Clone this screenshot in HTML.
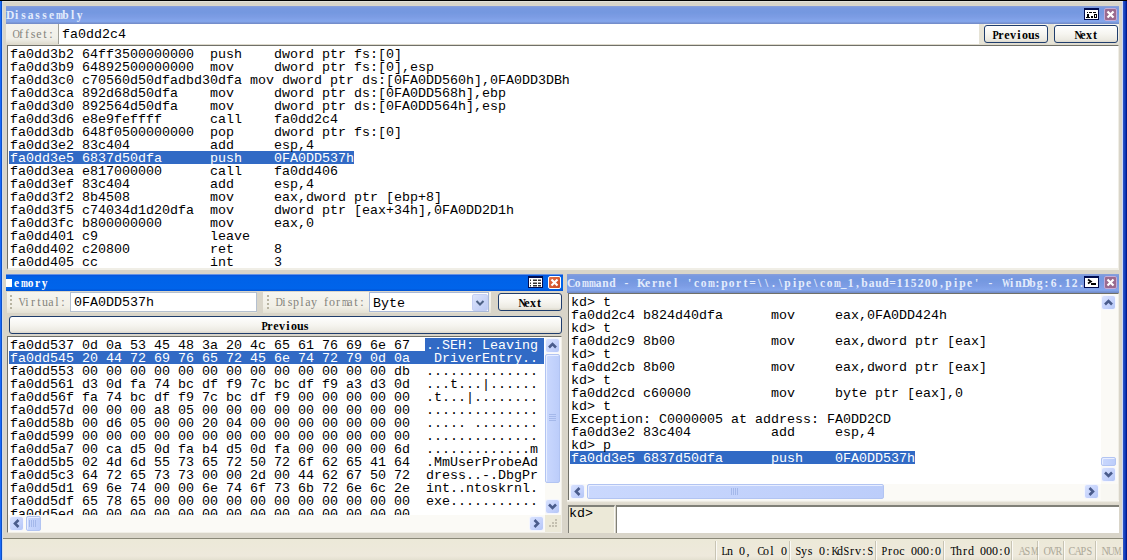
<!DOCTYPE html>
<html><head><meta charset="utf-8"><style>
html,body{margin:0;padding:0;}
body{width:1127px;height:560px;position:relative;overflow:hidden;background:#ece9d8;}
.t{position:absolute;white-space:pre;font-family:"Liberation Mono", monospace;font-size:13.333px;line-height:13px;}
.n{position:absolute;white-space:pre;font-family:"Liberation Mono", monospace;font-size:12px;line-height:12px;transform:scaleX(0.8333);transform-origin:0 0;}
.ns{position:absolute;white-space:pre;font-family:"Liberation Serif",serif;font-size:12px;line-height:12px;}
.ns span{display:inline-block;width:6px;text-align:center;}
.ns span.w{transform:scaleX(0.7);}
.ns span.u{transform:scaleX(0.85);}
.ts{position:absolute;white-space:pre;font-family:"Liberation Serif",serif;font-weight:bold;font-size:11.5px;line-height:12px;}
.ts span{display:inline-block;width:7px;text-align:center;}
.ts span.w{transform:scaleX(0.72);}
.tt{position:absolute;white-space:pre;font-family:"Liberation Mono", monospace;font-weight:bold;font-size:12px;line-height:12px;transform:scaleX(0.9722);transform-origin:0 0;}
</style></head><body>
<div style="position:absolute;left:0px;top:0px;width:1127px;height:560px;background:#d9d5c9"></div>
<div style="position:absolute;left:0px;top:0px;width:1px;height:560px;background:#1a6af8"></div>
<div style="position:absolute;left:1px;top:0px;width:1px;height:560px;background:#0c50c8"></div>
<div style="position:absolute;left:2px;top:1px;width:1px;height:559px;background:#d0dcec"></div>
<div style="position:absolute;left:1122px;top:1px;width:1px;height:559px;background:#c8d8fc"></div>
<div style="position:absolute;left:1123px;top:0px;width:1px;height:560px;background:#2a50c0"></div>
<div style="position:absolute;left:1124px;top:0px;width:1px;height:560px;background:#1844c0"></div>
<div style="position:absolute;left:1125px;top:0px;width:1px;height:560px;background:#0c34b0"></div>
<div style="position:absolute;left:1126px;top:0px;width:1px;height:560px;background:#001a90"></div>
<div style="position:absolute;left:0px;top:0px;width:1127px;height:1px;background:#000"></div>
<div style="position:absolute;left:3px;top:1px;width:1119px;height:1px;background:#e4e2da"></div>
<div style="position:absolute;left:6px;top:6px;width:1113px;height:18px;background:linear-gradient(#8ca0d8 0px,#7898e0 2px,#7498e0 35%,#7c9ce4 60%,#84a6ec 85%,#7088c4 100%)"></div>
<div class="ts" style="left:6px;top:9px;color:#e4ecfc;"><span>D</span><span>i</span><span>s</span><span>a</span><span>s</span><span>s</span><span>e</span><span class="w">m</span><span>b</span><span>l</span><span>y</span></div>
<div style="position:absolute;left:1084px;top:8px;width:15px;height:12px;box-sizing:border-box;background:#fff;border:1px solid #000c50;border-top-width:2px;"></div>
<svg style="position:absolute;left:1084px;top:8px" width="15" height="12" viewBox="0 0 15 12"><g fill="#000"><rect x="3" y="4" width="1" height="1"/><rect x="5" y="4" width="3" height="1"/><rect x="9" y="4" width="3" height="1"/><rect x="3" y="6" width="2" height="4"/><rect x="2" y="9" width="4" height="1"/><rect x="7" y="8" width="2" height="2"/><rect x="10" y="6" width="3" height="4"/></g><rect x="11" y="7" width="1" height="2" fill="#fff"/></svg>
<div style="position:absolute;left:1104px;top:8px;width:13px;height:13px;box-sizing:border-box;background:#9a6a8e;border:1px solid #c4acd8;border-radius:2px;"></div>
<svg style="position:absolute;left:1104px;top:8px" width="13" height="13" viewBox="0 0 13 13"><path d="M3.5 3.5 L9.5 9.5 M9.5 3.5 L3.5 9.5" stroke="#fff" stroke-width="2.2"/></svg>
<div style="position:absolute;left:6px;top:24px;width:1113px;height:21px;background:linear-gradient(#f4f3ee 0%,#f0efe8 70%,#dcd8ca 100%)"></div>
<div class="ns" style="left:12px;top:28px;color:#84847c;font-weight:normal;"><span class="u">O</span><span>f</span><span>f</span><span>s</span><span>e</span><span>t</span><span>:</span></div>
<div style="position:absolute;left:58px;top:24px;width:921px;height:20px;background:#fff;border-left:1px solid #a0a098;box-sizing:border-box"></div>
<div class="t" style="left:62px;top:28px;color:#000;">fa0dd2c4</div>
<div style="position:absolute;left:979px;top:24px;width:5px;height:20px;background:#e6e3d6"></div>
<div style="position:absolute;left:1048px;top:24px;width:6px;height:20px;background:#e6e3d6"></div>
<div style="position:absolute;left:984px;top:25px;width:64px;height:18px;box-sizing:border-box;border:1px solid #1f3d6c;border-radius:3px;background:linear-gradient(#fefefe 0%,#f6f5f0 50%,#eceae2 85%,#dcd8cc 100%);"></div>
<div class="ns" style="left:992px;top:29px;color:#000;font-weight:bold;"><span class="u">P</span><span>r</span><span>e</span><span>v</span><span>i</span><span>o</span><span>u</span><span>s</span></div>
<div style="position:absolute;left:1054px;top:25px;width:64px;height:18px;box-sizing:border-box;border:1px solid #1f3d6c;border-radius:3px;background:linear-gradient(#fefefe 0%,#f6f5f0 50%,#eceae2 85%,#dcd8cc 100%);"></div>
<div class="ns" style="left:1074px;top:29px;color:#000;font-weight:bold;"><span class="u">N</span><span>e</span><span>x</span><span>t</span></div>
<div style="position:absolute;left:7px;top:45px;width:1112px;height:225px;background:#fff;box-sizing:border-box;border-top:1px solid #707068;border-left:1px solid #707068;border-right:1px solid #f0eee6;border-bottom:2px solid #f0eee6;"></div>
<div style="position:absolute;left:9px;top:151px;width:345px;height:13px;background:#316ac5"></div>
<div class="t" style="left:10px;top:48px;color:#000;">fa0dd3b2 64ff3500000000  push    dword ptr fs:[0]</div>
<div class="t" style="left:10px;top:61px;color:#000;">fa0dd3b9 64892500000000  mov     dword ptr fs:[0],esp</div>
<div class="t" style="left:10px;top:74px;color:#000;">fa0dd3c0 c70560d50dfadbd30dfa mov dword ptr ds:[0FA0DD560h],0FA0DD3DBh</div>
<div class="t" style="left:10px;top:87px;color:#000;">fa0dd3ca 892d68d50dfa    mov     dword ptr ds:[0FA0DD568h],ebp</div>
<div class="t" style="left:10px;top:100px;color:#000;">fa0dd3d0 892564d50dfa    mov     dword ptr ds:[0FA0DD564h],esp</div>
<div class="t" style="left:10px;top:113px;color:#000;">fa0dd3d6 e8e9feffff      call    fa0dd2c4</div>
<div class="t" style="left:10px;top:126px;color:#000;">fa0dd3db 648f0500000000  pop     dword ptr fs:[0]</div>
<div class="t" style="left:10px;top:139px;color:#000;">fa0dd3e2 83c404          add     esp,4</div>
<div class="t" style="left:10px;top:152px;color:#fff;">fa0dd3e5 6837d50dfa      push    0FA0DD537h</div>
<div class="t" style="left:10px;top:165px;color:#000;">fa0dd3ea e817000000      call    fa0dd406</div>
<div class="t" style="left:10px;top:178px;color:#000;">fa0dd3ef 83c404          add     esp,4</div>
<div class="t" style="left:10px;top:191px;color:#000;">fa0dd3f2 8b4508          mov     eax,dword ptr [ebp+8]</div>
<div class="t" style="left:10px;top:204px;color:#000;">fa0dd3f5 c74034d1d20dfa  mov     dword ptr [eax+34h],0FA0DD2D1h</div>
<div class="t" style="left:10px;top:217px;color:#000;">fa0dd3fc b800000000      mov     eax,0</div>
<div class="t" style="left:10px;top:230px;color:#000;">fa0dd401 c9              leave</div>
<div class="t" style="left:10px;top:243px;color:#000;">fa0dd402 c20800          ret     8</div>
<div class="t" style="left:10px;top:256px;color:#000;">fa0dd405 cc              int     3</div>
<div style="position:absolute;left:6px;top:274px;width:557px;height:17px;background:linear-gradient(#c0d0f0 0px,#0a54d8 1px,#0062e8 3px,#0064ea 85%,#0052d4 100%)"></div>
<div class="ts" style="left:13px;top:277px;color:#fff;"><span>e</span><span class="w">m</span><span>o</span><span>r</span><span>y</span></div>
<div style="position:absolute;left:6px;top:279px;width:6px;height:8px;background:#fff"></div>
<div style="position:absolute;left:528px;top:276px;width:15px;height:12px;box-sizing:border-box;background:#fff;border:1px solid #000c50;border-top-width:2px;"></div>
<svg style="position:absolute;left:528px;top:276px" width="15" height="12" viewBox="0 0 15 12"><g fill="#333"><rect x="2" y="3.5" width="1" height="1.5"/><rect x="5" y="3.5" width="4" height="1.5"/><rect x="10" y="3.5" width="3" height="1.5"/><rect x="2" y="6.5" width="1" height="1.5"/><rect x="5" y="6.5" width="4" height="1.5"/><rect x="10" y="6.5" width="3" height="1.5"/><rect x="2" y="9" width="1" height="1.5"/><rect x="5" y="9" width="4" height="1.5"/><rect x="10" y="9" width="3" height="1.5"/></g></svg>
<div style="position:absolute;left:548px;top:276px;width:13px;height:13px;box-sizing:border-box;background:linear-gradient(135deg,#e46c44,#cc4a22);border:1px solid #fff;border-radius:2px;"></div>
<svg style="position:absolute;left:548px;top:276px" width="13" height="13" viewBox="0 0 13 13"><path d="M3.5 3.5 L9.5 9.5 M9.5 3.5 L3.5 9.5" stroke="#fff" stroke-width="2.2"/></svg>
<div style="position:absolute;left:7px;top:292px;width:250px;height:21px;background:linear-gradient(#f6f5f0 0%,#f1efe6 70%,#e4e1d4 100%)"></div>
<div style="position:absolute;left:10px;top:295px;width:2px;height:2px;background:#b8b4a2"></div>
<div style="position:absolute;left:10px;top:299px;width:2px;height:2px;background:#b8b4a2"></div>
<div style="position:absolute;left:10px;top:303px;width:2px;height:2px;background:#b8b4a2"></div>
<div style="position:absolute;left:10px;top:307px;width:2px;height:2px;background:#b8b4a2"></div>
<div class="ns" style="left:18px;top:296px;color:#84847c;font-weight:normal;"><span class="u">V</span><span>i</span><span>r</span><span>t</span><span>u</span><span>a</span><span>l</span><span>:</span></div>
<div style="position:absolute;left:70px;top:292px;width:187px;height:20px;background:#fff;box-sizing:border-box;border:1px solid #b4c0d0;"></div>
<div class="t" style="left:74px;top:296px;color:#000;">0FA0DD537h</div>
<div style="position:absolute;left:263px;top:292px;width:228px;height:21px;background:linear-gradient(#f6f5f0 0%,#f1efe6 70%,#e4e1d4 100%)"></div>
<div style="position:absolute;left:267px;top:295px;width:2px;height:2px;background:#b8b4a2"></div>
<div style="position:absolute;left:267px;top:299px;width:2px;height:2px;background:#b8b4a2"></div>
<div style="position:absolute;left:267px;top:303px;width:2px;height:2px;background:#b8b4a2"></div>
<div style="position:absolute;left:267px;top:307px;width:2px;height:2px;background:#b8b4a2"></div>
<div class="ns" style="left:275px;top:296px;color:#84847c;font-weight:normal;"><span class="u">D</span><span>i</span><span>s</span><span>p</span><span>l</span><span>a</span><span>y</span><span> </span><span>f</span><span>o</span><span>r</span><span class="w">m</span><span>a</span><span>t</span><span>:</span></div>
<div style="position:absolute;left:369px;top:292px;width:120px;height:20px;background:#fff;box-sizing:border-box;border:1px solid #a8b8d8;"></div>
<div class="t" style="left:373px;top:297px;color:#000;">Byte</div>
<div style="position:absolute;left:472px;top:294px;width:16px;height:17px;box-sizing:border-box;background:linear-gradient(135deg,#dce4fc,#bccaf4);border:1px solid #c6d0f4;border-radius:2px;"></div>
<svg style="position:absolute;left:472px;top:294px" width="16" height="17" viewBox="0 0 16 17"><path d="M4.5 7 L8 10.5 L11.5 7" stroke="#4d6185" stroke-width="2" fill="none"/></svg>
<div style="position:absolute;left:498px;top:293px;width:64px;height:18px;box-sizing:border-box;border:1px solid #1f3d6c;border-radius:3px;background:linear-gradient(#fefefe 0%,#f6f5f0 50%,#eceae2 85%,#dcd8cc 100%);"></div>
<div class="ns" style="left:518px;top:297px;color:#000;font-weight:bold;"><span class="u">N</span><span>e</span><span>x</span><span>t</span></div>
<div style="position:absolute;left:9px;top:316px;width:553px;height:18px;box-sizing:border-box;border:1px solid #1f3d6c;border-radius:3px;background:linear-gradient(#fefefe 0%,#f6f5f0 50%,#eceae2 85%,#dcd8cc 100%);"></div>
<div class="ns" style="left:261px;top:320px;color:#000;font-weight:bold;"><span class="u">P</span><span>r</span><span>e</span><span>v</span><span>i</span><span>o</span><span>u</span><span>s</span></div>
<div style="position:absolute;left:7px;top:336px;width:555px;height:197px;background:#fff;box-sizing:border-box;border-top:1px solid #707068;border-left:1px solid #707068;border-right:1px solid #f0eee6;border-bottom:1px solid #f0eee6;"></div>
<div style="position:absolute;left:425px;top:338px;width:119px;height:13px;background:#316ac5"></div>
<div style="position:absolute;left:9px;top:351px;width:535px;height:13px;background:#316ac5"></div>
<div class="t" style="left:10px;top:339px;color:#000;">fa0dd537 0d 0a 53 45 48 3a 20 4c 65 61 76 69 6e 67</div>
<div class="t" style="left:426px;top:339px;color:#fff;">..SEH: Leaving</div>
<div class="t" style="left:10px;top:352px;color:#fff;">fa0dd545 20 44 72 69 76 65 72 45 6e 74 72 79 0d 0a</div>
<div class="t" style="left:426px;top:352px;color:#fff;"> DriverEntry..</div>
<div class="t" style="left:10px;top:365px;color:#000;">fa0dd553 00 00 00 00 00 00 00 00 00 00 00 00 00 db</div>
<div class="t" style="left:426px;top:365px;color:#000;">..............</div>
<div class="t" style="left:10px;top:378px;color:#000;">fa0dd561 d3 0d fa 74 bc df f9 7c bc df f9 a3 d3 0d</div>
<div class="t" style="left:426px;top:378px;color:#000;">...t...|......</div>
<div class="t" style="left:10px;top:391px;color:#000;">fa0dd56f fa 74 bc df f9 7c bc df f9 00 00 00 00 00</div>
<div class="t" style="left:426px;top:391px;color:#000;">.t...|........</div>
<div class="t" style="left:10px;top:404px;color:#000;">fa0dd57d 00 00 00 a8 05 00 00 00 00 00 00 00 00 00</div>
<div class="t" style="left:426px;top:404px;color:#000;">..............</div>
<div class="t" style="left:10px;top:417px;color:#000;">fa0dd58b 00 d6 05 00 00 20 04 00 00 00 00 00 00 00</div>
<div class="t" style="left:426px;top:417px;color:#000;">..... ........</div>
<div class="t" style="left:10px;top:430px;color:#000;">fa0dd599 00 00 00 00 00 00 00 00 00 00 00 00 00 00</div>
<div class="t" style="left:426px;top:430px;color:#000;">..............</div>
<div class="t" style="left:10px;top:443px;color:#000;">fa0dd5a7 00 ca d5 0d fa b4 d5 0d fa 00 00 00 00 6d</div>
<div class="t" style="left:426px;top:443px;color:#000;">.............m</div>
<div class="t" style="left:10px;top:456px;color:#000;">fa0dd5b5 02 4d 6d 55 73 65 72 50 72 6f 62 65 41 64</div>
<div class="t" style="left:426px;top:456px;color:#000;">.MmUserProbeAd</div>
<div class="t" style="left:10px;top:469px;color:#000;">fa0dd5c3 64 72 65 73 73 00 00 2d 00 44 62 67 50 72</div>
<div class="t" style="left:426px;top:469px;color:#000;">dress..-.DbgPr</div>
<div class="t" style="left:10px;top:482px;color:#000;">fa0dd5d1 69 6e 74 00 00 6e 74 6f 73 6b 72 6e 6c 2e</div>
<div class="t" style="left:426px;top:482px;color:#000;">int..ntoskrnl.</div>
<div class="t" style="left:10px;top:495px;color:#000;">fa0dd5df 65 78 65 00 00 00 00 00 00 00 00 00 00 00</div>
<div class="t" style="left:426px;top:495px;color:#000;">exe...........</div>
<div class="t" style="left:10px;top:508px;color:#000;">fa0dd5ed 00 00 00 00 00 00 00 00 00 00 00 00 00 00</div>
<div class="t" style="left:426px;top:508px;color:#000;">..............</div>
<div style="position:absolute;left:8px;top:515px;width:553px;height:17px;background:#fff"></div>
<div style="position:absolute;left:545px;top:337px;width:16px;height:178px;background:#fbfaf6"></div>
<div style="position:absolute;left:545px;top:338px;width:15px;height:15px;box-sizing:border-box;background:linear-gradient(135deg,#d8e2fe 0%,#c6d3fc 55%,#b4c6f6 100%);border:1px solid #f4f6ff;border-radius:3px;"></div>
<svg style="position:absolute;left:0;top:0;overflow:visible" width="1" height="1"><path d="M549.0 347.5 L552.5 344.0 L556.0 347.5" stroke="#4a5c8c" stroke-width="2.6" fill="none"/></svg>
<div style="position:absolute;left:545px;top:354px;width:15px;height:129px;box-sizing:border-box;background:linear-gradient(90deg,#cad8fd,#bccdfa);border:1px solid #b2c4f2;border-radius:2px;box-shadow:inset 1px 1px 0 #e8eeff;"></div>
<div style="position:absolute;left:549px;top:414px;width:7px;height:1px;background:#a4b8ea"></div>
<div style="position:absolute;left:549px;top:416px;width:7px;height:1px;background:#a4b8ea"></div>
<div style="position:absolute;left:549px;top:418px;width:7px;height:1px;background:#a4b8ea"></div>
<div style="position:absolute;left:549px;top:420px;width:7px;height:1px;background:#a4b8ea"></div>
<div style="position:absolute;left:545px;top:499px;width:15px;height:15px;box-sizing:border-box;background:linear-gradient(135deg,#d8e2fe 0%,#c6d3fc 55%,#b4c6f6 100%);border:1px solid #f4f6ff;border-radius:3px;"></div>
<svg style="position:absolute;left:0;top:0;overflow:visible" width="1" height="1"><path d="M549.0 504.5 L552.5 508.0 L556.0 504.5" stroke="#4a5c8c" stroke-width="2.6" fill="none"/></svg>
<div style="position:absolute;left:8px;top:515px;width:537px;height:17px;background:#fbfaf6"></div>
<div style="position:absolute;left:9px;top:516px;width:15px;height:15px;box-sizing:border-box;background:linear-gradient(135deg,#d8e2fe 0%,#c6d3fc 55%,#b4c6f6 100%);border:1px solid #f4f6ff;border-radius:3px;"></div>
<svg style="position:absolute;left:0;top:0;overflow:visible" width="1" height="1"><path d="M18.5 520.0 L15.0 523.5 L18.5 527.0" stroke="#4a5c8c" stroke-width="2.6" fill="none"/></svg>
<div style="position:absolute;left:26px;top:516px;width:15px;height:15px;box-sizing:border-box;background:linear-gradient(90deg,#cad8fd,#bccdfa);border:1px solid #b2c4f2;border-radius:2px;box-shadow:inset 1px 1px 0 #e8eeff;"></div>
<div style="position:absolute;left:29px;top:520px;width:1px;height:7px;background:#a4b8ea"></div>
<div style="position:absolute;left:31px;top:520px;width:1px;height:7px;background:#a4b8ea"></div>
<div style="position:absolute;left:33px;top:520px;width:1px;height:7px;background:#a4b8ea"></div>
<div style="position:absolute;left:35px;top:520px;width:1px;height:7px;background:#a4b8ea"></div>
<div style="position:absolute;left:529px;top:516px;width:15px;height:15px;box-sizing:border-box;background:linear-gradient(135deg,#d8e2fe 0%,#c6d3fc 55%,#b4c6f6 100%);border:1px solid #f4f6ff;border-radius:3px;"></div>
<svg style="position:absolute;left:0;top:0;overflow:visible" width="1" height="1"><path d="M534.5 520.0 L538.0 523.5 L534.5 527.0" stroke="#4a5c8c" stroke-width="2.6" fill="none"/></svg>
<div style="position:absolute;left:545px;top:515px;width:16px;height:17px;background:#ece9d8"></div>
<div style="position:absolute;left:555px;top:519px;width:2px;height:2px;background:#c4c0b0"></div>
<div style="position:absolute;left:552px;top:522px;width:2px;height:2px;background:#c4c0b0"></div>
<div style="position:absolute;left:555px;top:522px;width:2px;height:2px;background:#c4c0b0"></div>
<div style="position:absolute;left:549px;top:525px;width:2px;height:2px;background:#c4c0b0"></div>
<div style="position:absolute;left:552px;top:525px;width:2px;height:2px;background:#c4c0b0"></div>
<div style="position:absolute;left:555px;top:525px;width:2px;height:2px;background:#c4c0b0"></div>
<div style="position:absolute;left:567px;top:274px;width:552px;height:19px;background:linear-gradient(#8ca0d8 0px,#7898e0 2px,#7498e0 35%,#7c9ce4 60%,#84a6ec 85%,#7088c4 100%)"></div>
<div class="ts" style="left:567px;top:277px;color:#e4ecfc;"><span>C</span><span>o</span><span class="w">m</span><span class="w">m</span><span>a</span><span>n</span><span>d</span><span> </span><span>-</span><span> </span><span>K</span><span>e</span><span>r</span><span>n</span><span>e</span><span>l</span><span> </span><span>&#x27;</span><span>c</span><span>o</span><span class="w">m</span><span>:</span><span>p</span><span>o</span><span>r</span><span>t</span><span>=</span><span>\</span><span>\</span><span>.</span><span>\</span><span>p</span><span>i</span><span>p</span><span>e</span><span>\</span><span>c</span><span>o</span><span class="w">m</span><span>_</span><span>1</span><span>,</span><span>b</span><span>a</span><span>u</span><span>d</span><span>=</span><span>1</span><span>1</span><span>5</span><span>2</span><span>0</span><span>0</span><span>,</span><span>p</span><span>i</span><span>p</span><span>e</span><span>&#x27;</span><span> </span><span>-</span><span> </span><span class="w">W</span><span>i</span><span>n</span><span>D</span><span>b</span><span>g</span><span>:</span><span>6</span><span>.</span><span>1</span><span>2</span><span>.</span></div>
<div style="position:absolute;left:1084px;top:276px;width:15px;height:12px;box-sizing:border-box;background:#fff;border:1px solid #000c50;border-top-width:2px;"></div>
<svg style="position:absolute;left:1084px;top:276px" width="15" height="12" viewBox="0 0 15 12"><path d="M4 3.5 L7 5.5 L4 7.5" stroke="#000" stroke-width="1.6" fill="none"/><rect x="7" y="7" width="5" height="2" fill="#000"/></svg>
<div style="position:absolute;left:1104px;top:276px;width:13px;height:13px;box-sizing:border-box;background:#9a6a8e;border:1px solid #c4acd8;border-radius:2px;"></div>
<svg style="position:absolute;left:1104px;top:276px" width="13" height="13" viewBox="0 0 13 13"><path d="M3.5 3.5 L9.5 9.5 M9.5 3.5 L3.5 9.5" stroke="#fff" stroke-width="2.2"/></svg>
<div style="position:absolute;left:568px;top:293px;width:551px;height:208px;background:#fff;box-sizing:border-box;border-top:1px solid #707068;border-left:1px solid #707068;border-right:1px solid #f0eee6;"></div>
<div style="position:absolute;left:570px;top:451px;width:345px;height:13px;background:#316ac5"></div>
<div class="t" style="left:571px;top:296px;color:#000;">kd&gt; t</div>
<div class="t" style="left:571px;top:309px;color:#000;">fa0dd2c4 b824d40dfa      mov     eax,0FA0DD424h</div>
<div class="t" style="left:571px;top:322px;color:#000;">kd&gt; t</div>
<div class="t" style="left:571px;top:335px;color:#000;">fa0dd2c9 8b00            mov     eax,dword ptr [eax]</div>
<div class="t" style="left:571px;top:348px;color:#000;">kd&gt; t</div>
<div class="t" style="left:571px;top:361px;color:#000;">fa0dd2cb 8b00            mov     eax,dword ptr [eax]</div>
<div class="t" style="left:571px;top:374px;color:#000;">kd&gt; t</div>
<div class="t" style="left:571px;top:387px;color:#000;">fa0dd2cd c60000          mov     byte ptr [eax],0</div>
<div class="t" style="left:571px;top:400px;color:#000;">kd&gt; t</div>
<div class="t" style="left:571px;top:413px;color:#000;">Exception: C0000005 at address: FA0DD2CD</div>
<div class="t" style="left:571px;top:426px;color:#000;">fa0dd3e2 83c404          add     esp,4</div>
<div class="t" style="left:571px;top:439px;color:#000;">kd&gt; p</div>
<div class="t" style="left:571px;top:452px;color:#fff;">fa0dd3e5 6837d50dfa      push    0FA0DD537h</div>
<div style="position:absolute;left:1101px;top:294px;width:17px;height:190px;background:#fbfaf6"></div>
<div style="position:absolute;left:1101px;top:295px;width:15px;height:15px;box-sizing:border-box;background:linear-gradient(135deg,#d8e2fe 0%,#c6d3fc 55%,#b4c6f6 100%);border:1px solid #f4f6ff;border-radius:3px;"></div>
<svg style="position:absolute;left:0;top:0;overflow:visible" width="1" height="1"><path d="M1105.0 304.5 L1108.5 301.0 L1112.0 304.5" stroke="#4a5c8c" stroke-width="2.6" fill="none"/></svg>
<div style="position:absolute;left:1101px;top:457px;width:15px;height:9px;box-sizing:border-box;background:linear-gradient(90deg,#cad8fd,#bccdfa);border:1px solid #b2c4f2;border-radius:2px;box-shadow:inset 1px 1px 0 #e8eeff;"></div>
<div style="position:absolute;left:1101px;top:467px;width:15px;height:15px;box-sizing:border-box;background:linear-gradient(135deg,#d8e2fe 0%,#c6d3fc 55%,#b4c6f6 100%);border:1px solid #f4f6ff;border-radius:3px;"></div>
<svg style="position:absolute;left:0;top:0;overflow:visible" width="1" height="1"><path d="M1105.0 472.5 L1108.5 476.0 L1112.0 472.5" stroke="#4a5c8c" stroke-width="2.6" fill="none"/></svg>
<div style="position:absolute;left:569px;top:484px;width:549px;height:16px;background:#fbfaf6"></div>
<div style="position:absolute;left:570px;top:484px;width:15px;height:15px;box-sizing:border-box;background:linear-gradient(135deg,#d8e2fe 0%,#c6d3fc 55%,#b4c6f6 100%);border:1px solid #f4f6ff;border-radius:3px;"></div>
<svg style="position:absolute;left:0;top:0;overflow:visible" width="1" height="1"><path d="M579.5 488.0 L576.0 491.5 L579.5 495.0" stroke="#4a5c8c" stroke-width="2.6" fill="none"/></svg>
<div style="position:absolute;left:587px;top:484px;width:297px;height:15px;box-sizing:border-box;background:linear-gradient(90deg,#cad8fd,#bccdfa);border:1px solid #b2c4f2;border-radius:2px;box-shadow:inset 1px 1px 0 #e8eeff;"></div>
<div style="position:absolute;left:731px;top:488px;width:1px;height:7px;background:#a4b8ea"></div>
<div style="position:absolute;left:733px;top:488px;width:1px;height:7px;background:#a4b8ea"></div>
<div style="position:absolute;left:735px;top:488px;width:1px;height:7px;background:#a4b8ea"></div>
<div style="position:absolute;left:737px;top:488px;width:1px;height:7px;background:#a4b8ea"></div>
<div style="position:absolute;left:1084px;top:484px;width:15px;height:15px;box-sizing:border-box;background:linear-gradient(135deg,#d8e2fe 0%,#c6d3fc 55%,#b4c6f6 100%);border:1px solid #f4f6ff;border-radius:3px;"></div>
<svg style="position:absolute;left:0;top:0;overflow:visible" width="1" height="1"><path d="M1089.5 488.0 L1093.0 491.5 L1089.5 495.0" stroke="#4a5c8c" stroke-width="2.6" fill="none"/></svg>
<div style="position:absolute;left:1101px;top:484px;width:17px;height:16px;background:#f8f7f2"></div>
<div style="position:absolute;left:567px;top:500px;width:552px;height:5px;background:linear-gradient(#f8f7f2 0px,#f8f7f2 1px,#e4e0d4 2px,#dcd8cc 100%)"></div>
<div style="position:absolute;left:568px;top:505px;width:47px;height:28px;background:#ece9d8;box-sizing:border-box;border-top:2px solid #808078;border-left:1px solid #808078;border-right:1px solid #fafaf6;"></div>
<div class="t" style="left:569px;top:507px;color:#000;">kd&gt;</div>
<div style="position:absolute;left:616px;top:505px;width:503px;height:28px;background:#fff;box-sizing:border-box;border-left:1px solid #808078;border-top:2px solid #808078;"></div>
<div style="position:absolute;left:3px;top:538px;width:1120px;height:1px;background:#8a8878"></div>
<div style="position:absolute;left:3px;top:539px;width:1120px;height:21px;background:linear-gradient(#ece9d8,#eee9dc 80%,#e4e0d0)"></div>
<div style="position:absolute;left:715px;top:541px;width:1px;height:19px;background:#c8c4b4"></div>
<div style="position:absolute;left:716px;top:541px;width:1px;height:19px;background:#fbfaf6"></div>
<div style="position:absolute;left:789px;top:541px;width:1px;height:19px;background:#c8c4b4"></div>
<div style="position:absolute;left:790px;top:541px;width:1px;height:19px;background:#fbfaf6"></div>
<div style="position:absolute;left:875px;top:541px;width:1px;height:19px;background:#c8c4b4"></div>
<div style="position:absolute;left:876px;top:541px;width:1px;height:19px;background:#fbfaf6"></div>
<div style="position:absolute;left:943px;top:541px;width:1px;height:19px;background:#c8c4b4"></div>
<div style="position:absolute;left:944px;top:541px;width:1px;height:19px;background:#fbfaf6"></div>
<div style="position:absolute;left:1011px;top:541px;width:1px;height:19px;background:#c8c4b4"></div>
<div style="position:absolute;left:1012px;top:541px;width:1px;height:19px;background:#fbfaf6"></div>
<div style="position:absolute;left:1037px;top:541px;width:1px;height:19px;background:#c8c4b4"></div>
<div style="position:absolute;left:1038px;top:541px;width:1px;height:19px;background:#fbfaf6"></div>
<div style="position:absolute;left:1063px;top:541px;width:1px;height:19px;background:#c8c4b4"></div>
<div style="position:absolute;left:1064px;top:541px;width:1px;height:19px;background:#fbfaf6"></div>
<div style="position:absolute;left:1095px;top:541px;width:1px;height:19px;background:#c8c4b4"></div>
<div style="position:absolute;left:1096px;top:541px;width:1px;height:19px;background:#fbfaf6"></div>
<div class="ns" style="left:721px;top:545px;color:#000;font-weight:normal;"><span class="u">L</span><span>n</span><span> </span><span>0</span><span>,</span><span> </span><span class="u">C</span><span>o</span><span>l</span><span> </span><span>0</span></div>
<div class="ns" style="left:795px;top:545px;color:#000;font-weight:normal;"><span class="u">S</span><span>y</span><span>s</span><span> </span><span>0</span><span>:</span><span class="u">K</span><span>d</span><span class="u">S</span><span>r</span><span>v</span><span>:</span><span class="u">S</span></div>
<div class="ns" style="left:881px;top:545px;color:#000;font-weight:normal;"><span class="u">P</span><span>r</span><span>o</span><span>c</span><span> </span><span>0</span><span>0</span><span>0</span><span>:</span><span>0</span></div>
<div class="ns" style="left:950px;top:545px;color:#000;font-weight:normal;"><span class="u">T</span><span>h</span><span>r</span><span>d</span><span> </span><span>0</span><span>0</span><span>0</span><span>:</span><span>0</span></div>
<div class="ns" style="left:1018px;top:545px;color:#aca898;font-weight:normal;"><span class="u">A</span><span class="u">S</span><span class="w">M</span></div>
<div class="ns" style="left:1043px;top:545px;color:#aca898;font-weight:normal;"><span class="u">O</span><span class="u">V</span><span class="u">R</span></div>
<div class="ns" style="left:1068px;top:545px;color:#aca898;font-weight:normal;"><span class="u">C</span><span class="u">A</span><span class="u">P</span><span class="u">S</span></div>
<div class="ns" style="left:1101px;top:545px;color:#aca898;font-weight:normal;"><span class="u">N</span><span class="u">U</span><span class="w">M</span></div>
</body></html>
